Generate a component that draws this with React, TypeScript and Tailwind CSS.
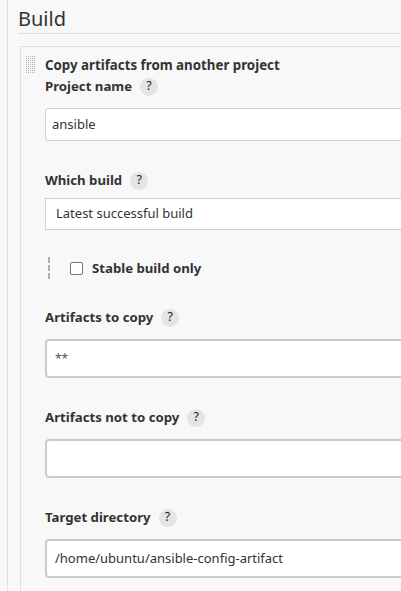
import React from "react";

function Help() {
  return (
    <span className="ml-[8px] inline-flex h-[18px] w-[18px] items-center justify-center rounded-full bg-[#e4e4e4] text-[12.5px] font-normal leading-none text-[#222]">
      ?
    </span>
  );
}

function Label({ text, className = "" }: { text: string; className?: string }) {
  return (
    <div className={`flex h-[20px] items-center pt-[1px] text-[13.2px] font-bold text-[#333] ${className}`}>
      <span className="pt-[1px]">{text}</span>
      <Help />
    </div>
  );
}

function Handle() {
  const dots: React.ReactElement[] = [];
  for (let r = 0; r < 9; r++) {
    for (let c = 0; c < 5; c++) {
      dots.push(<rect key={`${r}-${c}`} x={c * 2} y={r * 2} width={1} height={1} fill="#b5b5b5" />);
    }
  }
  return (
    <svg width="10" height="18" viewBox="0 0 10 18">
      {dots}
    </svg>
  );
}

export default function App() {
  return (
    <div className="h-[591px] w-[401px] overflow-hidden bg-[#f8f8f8] font-['Noto_Sans',sans-serif] text-[#333]">
      <div className="ml-[7px] h-full border-l border-[#dde0e3] pl-[12px]">
        <h2 className="-ml-[2px] h-[34px] border-b border-[#dcdfe2] pt-[6px] text-[20px] leading-[26px] font-normal text-[#333]">
          Build
        </h2>
        <div className="mt-[12px] flex h-full border-l border-t border-[#dde0e3]">
          <div className="w-[24px] shrink-0 pl-[5px] pt-[9px]">
            <Handle />
          </div>
          <div className="flex flex-col">
            <div className="mt-[8px] flex h-[20px] items-center whitespace-nowrap pt-[2px] text-[13.3px] font-bold">
              Copy artifacts from another project
            </div>
            <Label text="Project name" className="mt-[1px]" />
            <div className="mt-[12px] flex h-[33px] w-[400px] items-center rounded-[3px] border border-[#c9d1d6] bg-white pl-[6px] text-[13px]">
              ansible
            </div>
            <Label text="Which build" className="mt-[29px]" />
            <div className="mt-[8px] flex h-[32px] w-[400px] items-center border border-[#c9d1d6] bg-white pl-[10px] text-[13px]">
              Latest successful build
            </div>
            <div className="mt-[27px] flex h-[22px] items-center">
              <div className="ml-[3px] h-[22px] border-l-2 border-dashed border-[#b0b0b0]" />
              <span className="ml-[20px] inline-block h-[13px] w-[13px] rounded-[2px] border border-[#767676] bg-white" />
              <span className="ml-[9px] pt-[1px] text-[13.2px] font-bold">Stable build only</span>
            </div>
            <Label text="Artifacts to copy" className="mt-[28px]" />
            <div className="mt-[12px] flex h-[39px] w-[400px] items-center rounded-[4px] border-2 border-[#c3ccd1] bg-white pl-[8px] text-[12px] text-[#555]">
              **
            </div>
            <Label text="Artifacts not to copy" className="mt-[29px]" />
            <div className="mt-[12px] h-[39px] w-[400px] rounded-[4px] border-2 border-[#c3ccd1] bg-white" />
            <Label text="Target directory" className="mt-[29px]" />
            <div className="mt-[12px] flex h-[39px] w-[400px] items-center whitespace-nowrap rounded-[4px] border-2 border-[#c3ccd1] bg-white pl-[8px] text-[13px]">
              /home/ubuntu/ansible-config-artifact
            </div>
          </div>
        </div>
      </div>
    </div>
  );
}
